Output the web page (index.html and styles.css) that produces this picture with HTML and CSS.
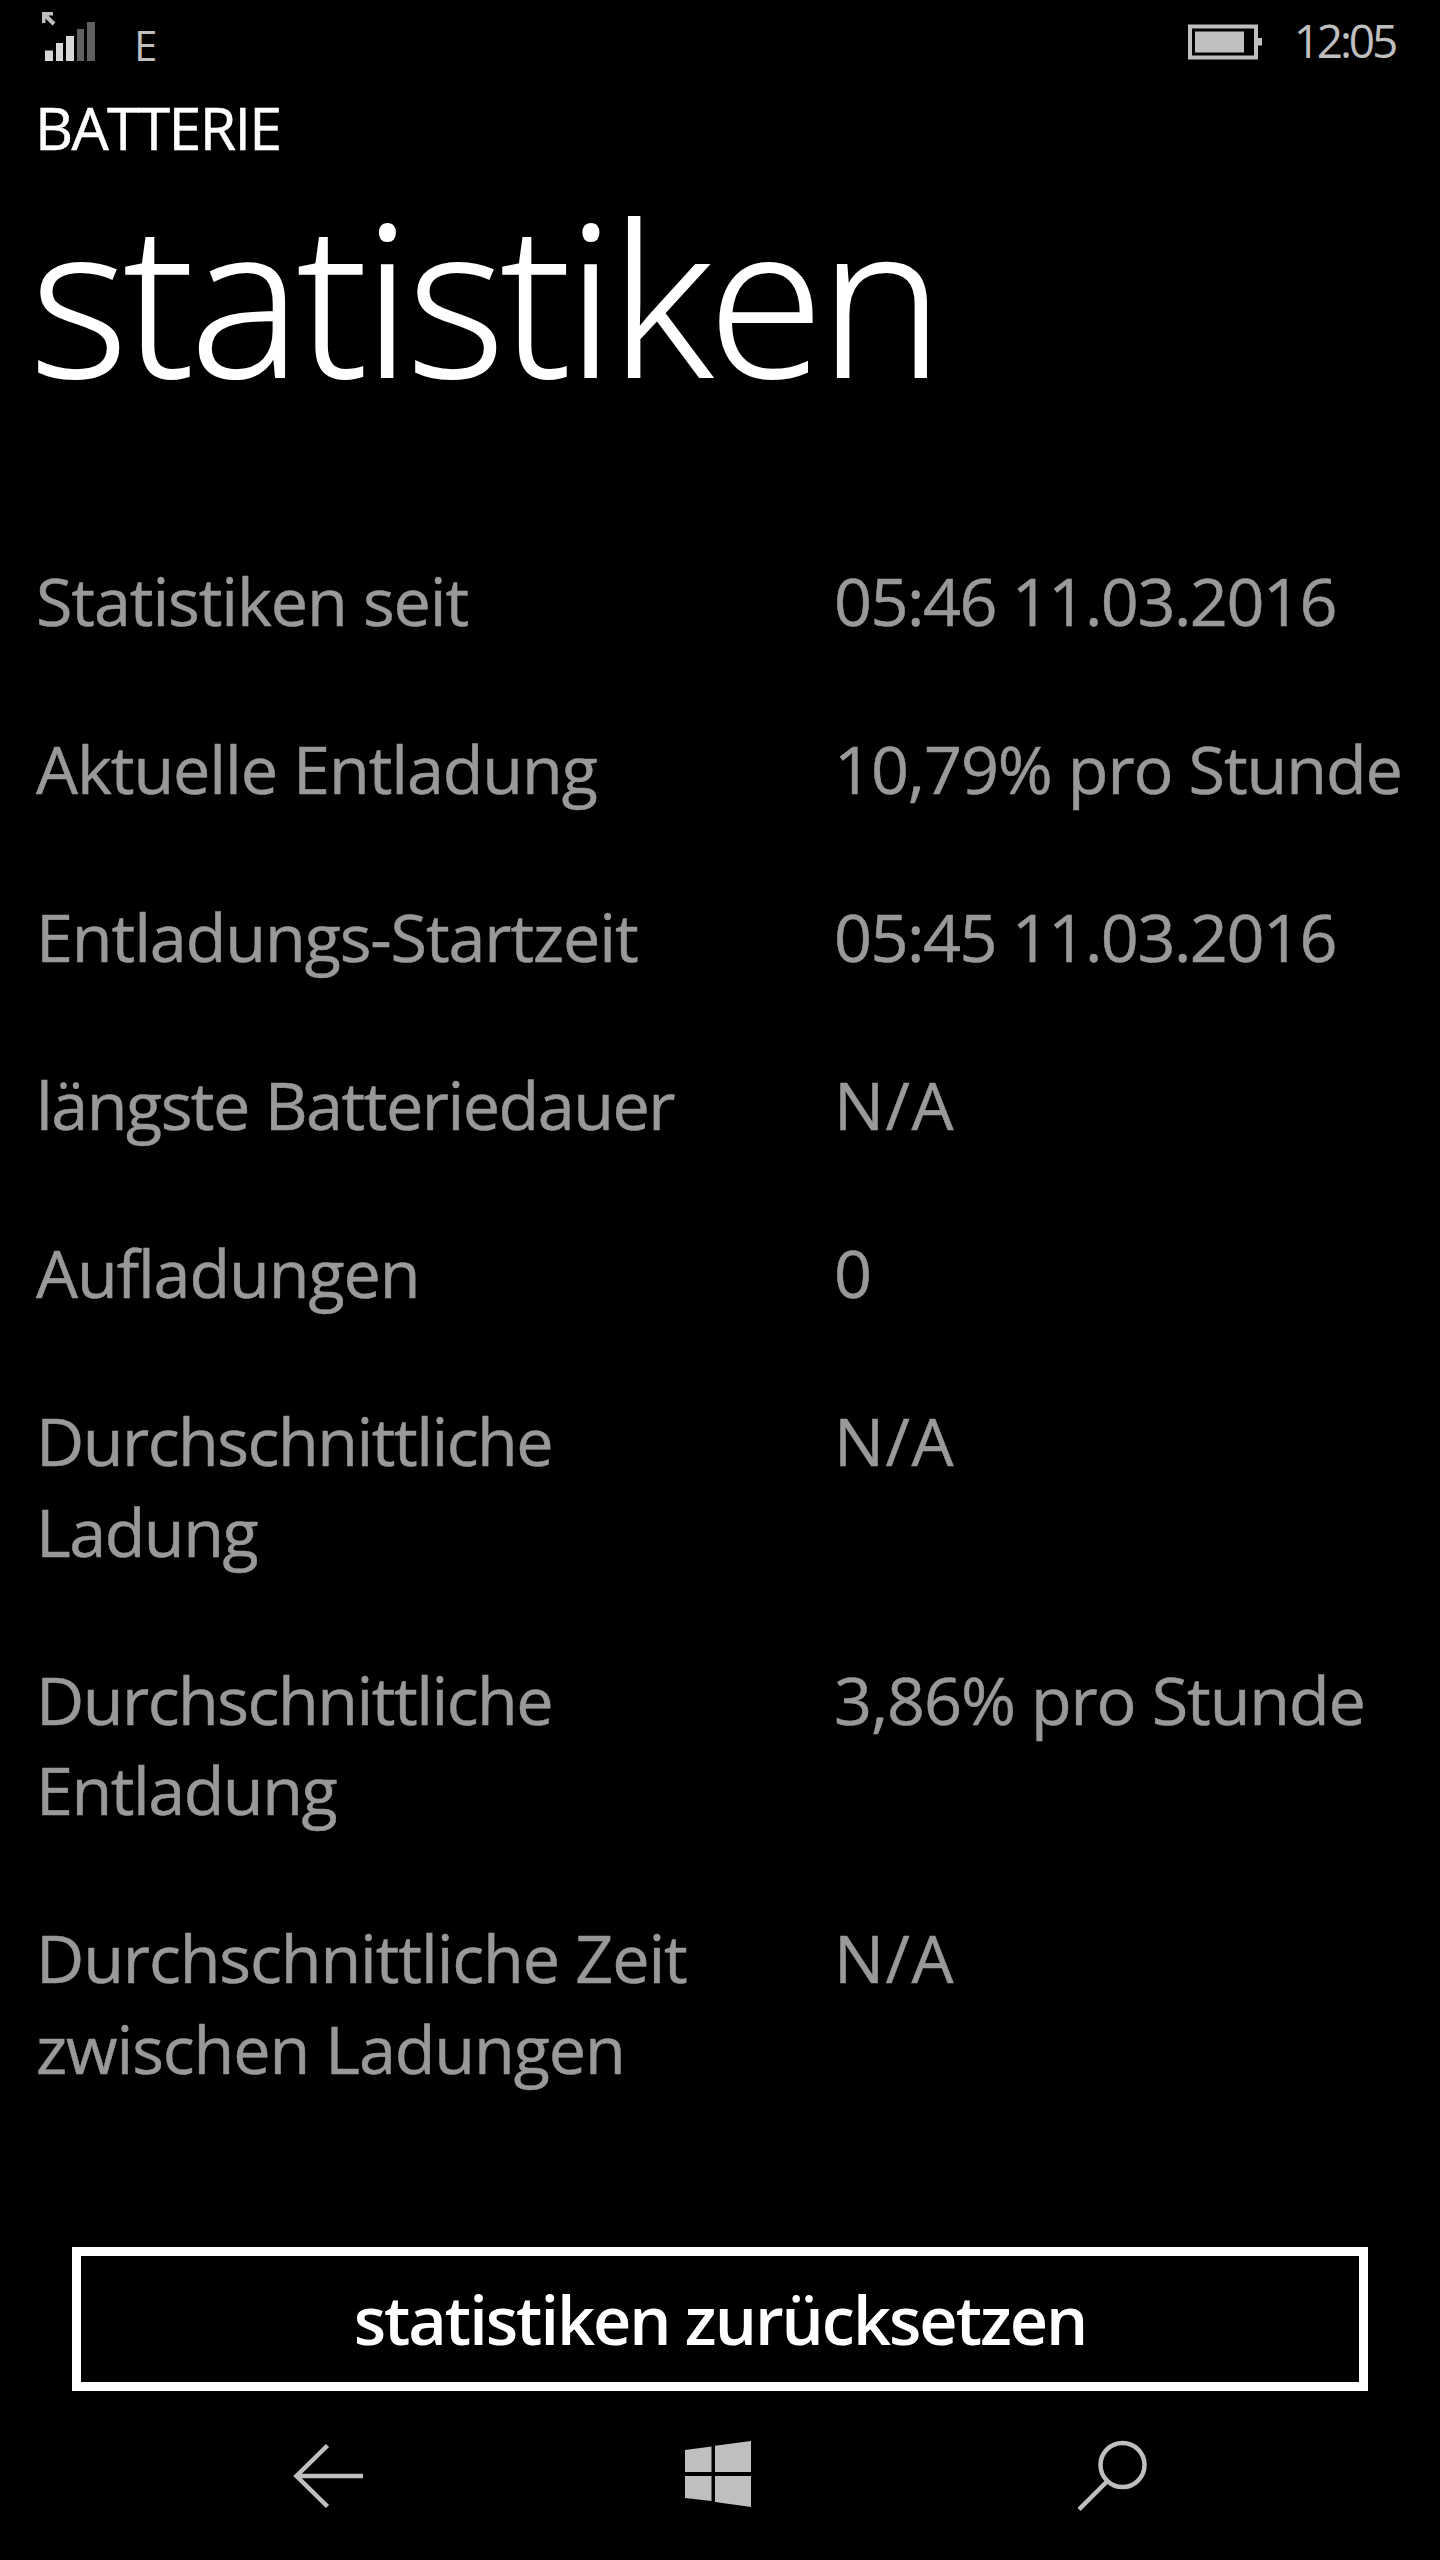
FILE: index.html
```html
<!DOCTYPE html>
<html lang="de">
    <head>
        <meta charset="utf-8">
        <title>Batterie</title>
        <link rel="stylesheet" href="styles.css">
    </head>
    <body>
        <div class="status">
            <svg class="signal" width="56" height="54" viewBox="0 0 56 54">
                <path fill="#bfbfbf" d="M2 4h11v3.500h-4.500l7 7-3 3-7-7v4.500H2z"/>
                <path fill="#d8d8d8" d="M5 42.500h8V53H5zM16 35h7v18h-7zM26 28h8v25h-8z"/>
                <path fill="#606060" d="M37 21h7v32h-7zM47 14h8v39h-8z"/>
            </svg>
            <span class="network">E</span>
            <svg class="battery" width="76" height="36" viewBox="0 0 76 36">
                <path fill="none" stroke="#bfbfbf" stroke-width="4" d="M2 2.500h66v31H2z"/>
                <path fill="#bfbfbf" d="M7 7.500h49v21H7zM70 14h4v7.500h-4z"/>
            </svg>
            <span class="clock">12:05</span>
        </div>
        <div class="app">BATTERIE</div>
        <h1>statistiken</h1>
        <div class="stats">
            <div class="label">Statistiken seit</div>
            <div class="value date">05:46 11.03.2016</div>
            <div class="label">Aktuelle Entladung</div>
            <div class="value">10,79% pro Stunde</div>
            <div class="label">Entladungs-Startzeit</div>
            <div class="value date">05:45 11.03.2016</div>
            <div class="label tight">längste Batteriedauer</div>
            <div class="value none">N/A</div>
            <div class="label">Aufladungen</div>
            <div class="value">0</div>
            <div class="label tight">Durchschnittliche Ladung</div>
            <div class="value none">N/A</div>
            <div class="label tight">Durchschnittliche Entladung</div>
            <div class="value">3,86% pro Stunde</div>
            <div class="label">Durchschnittliche Zeit zwischen Ladungen</div>
            <div class="value none">N/A</div>
        </div>
        <button class="reset">statistiken zurücksetzen</button>
        <div class="nav">
            <svg width="72" height="72" viewBox="0 0 72 72">
                <path fill="none" stroke="#bfbfbf" stroke-width="4.500" d="M71 36H4M35.500 5.500L4.500 36l31 30.500"/>
            </svg>
            <svg width="72" height="72" viewBox="0 0 72 72">
                <path fill="#bfbfbf" d="M0 10l26.500-3.500V32H0zM30 5.700L66 1v31H30zM0 36h26.500v25L0 58zM30 36h36v31l-36-5z"/>
            </svg>
            <svg width="72" height="72" viewBox="0 0 72 72">
                <circle cx="44.500" cy="25" r="22" fill="none" stroke="#bfbfbf" stroke-width="4.500"/>
                <path fill="none" stroke="#bfbfbf" stroke-width="4.500" d="M29.500 41L1 69.500"/>
            </svg>
        </div>
    </body>
</html>
```
FILE: styles.css
```css
body {
    background-color: #000;
    color: #fff;
    font-family: "Open Sans", "Noto Sans", sans-serif;
    margin: 0;
}

.status {
    display: flex;
    height: 87px;
    color: #bfbfbf;
}

.signal {
    margin: 8px 0 0 40px;
}

.network {
    font-size: 42px;
    line-height: 58px;
    margin: 16px 0 0 38px;
}

.battery {
    margin: 24px 0 0 auto;
}

.clock {
    font-size: 46px;
    letter-spacing: -3.2px;
    line-height: 62px;
    margin: 9px 45px 0 30px;
}

.app {
    font-size: 59px;
    letter-spacing: -1.7px;
    line-height: 80px;
    margin-left: 35px;
    -webkit-text-stroke: 0.5px;
}

h1 {
    font-size: 210px;
    font-weight: 300;
    letter-spacing: -4px;
    line-height: 259px;
    margin: 0 0 129px 30px;
    -webkit-text-stroke: 2px;
}

.stats {
    display: grid;
    grid-template-columns: 798px 1fr;
    row-gap: 77.5px;
    margin-left: 36px;
    color: #999;
    font-size: 66.5px;
    letter-spacing: -1.1px;
    line-height: 90.5px;
    -webkit-text-stroke: 0.5px;
}

.label {
    width: 690px;
}

.value {
    white-space: nowrap;
}

.tight,
.date {
    letter-spacing: -1.5px;
}

.none {
    letter-spacing: 1.5px;
}

.reset {
    display: block;
    width: 1296px;
    height: 144px;
    margin: 154px auto 0;
    padding: 0;
    border: 9px solid #fff;
    background: none;
    color: #fff;
    font-family: inherit;
    font-size: 66.5px;
    font-weight: 600;
    letter-spacing: -2px;
}

.nav {
    display: flex;
    justify-content: space-between;
    height: 72px;
    padding: 49px 290px 48px 292px;
}
```
